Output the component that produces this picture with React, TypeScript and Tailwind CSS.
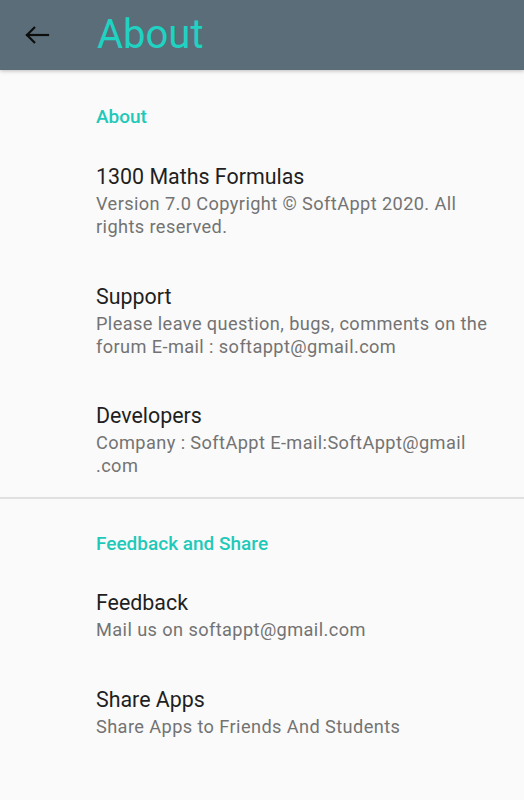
import React from "react";

type Item = { title: string; summary: string };

const Pref = ({ title, summary }: Item) => (
  <div className="pl-24 pr-[24px] pt-[22px] pb-[21px]">
    <div className="text-[21.4px] leading-[31px] text-[#1f1f1f]">{title}</div>
    <div className="text-[18.2px] leading-[23px] tracking-[0.4px] text-[#737373]">{summary}</div>
  </div>
);

const Header = ({ children }: { children: React.ReactNode }) => (
  <div className="pl-24 text-[19px] leading-[24px] font-medium text-[#1fc9b9]">{children}</div>
);

export default function App() {
  return (
    <div
      className="w-[524px] h-[800px] bg-[#fafafa] overflow-hidden"
      style={{ fontFamily: "Roboto, 'Noto Sans', sans-serif" }}
    >
      <div className="relative z-10 h-[70px] bg-[#5a6d78] flex items-center shadow-[0_1px_4px_rgba(0,0,0,0.25)]">
        <div className="w-24 flex items-center pl-[25px]">
          <svg width="26" height="20" viewBox="0 0 26 20" fill="none" stroke="#0d0d0d" strokeWidth="2.2" strokeLinecap="square">
            <path d="M2 10H23" />
            <path d="M10 2L2 10L10 18" strokeLinecap="butt" />
          </svg>
        </div>
        <div className="text-[40px] leading-none text-[#20d2c2] mt-[-1px] pl-[1px]">About</div>
      </div>

      <div className="pt-[35px]">
        <Header>About</Header>
        <div className="h-[10px]" />
        <Pref title="1300 Maths Formulas" summary="Version 7.0 Copyright © SoftAppt 2020. All rights reserved." />
        <Pref title="Support" summary="Please leave question, bugs, comments on the forum E-mail : softappt@gmail.com" />
        <div className="pl-24 pr-[24px] pt-[21px] pb-[20px]">
          <div className="text-[21.4px] leading-[31px] text-[#1f1f1f]">Developers</div>
          <div className="text-[18.2px] leading-[23px] tracking-[0.4px] text-[#737373]">
            Company : SoftAppt E-mail:SoftAppt@gmail .com
          </div>
        </div>
      </div>
      <div className="h-[2px] bg-[#e0e0e0]" />
      <div className="pt-[33px]">
        <Header>Feedback and Share</Header>
        <div className="h-[9px]" />
        <Pref title="Feedback" summary="Mail us on softappt@gmail.com" />
        <Pref title="Share Apps" summary="Share Apps to Friends And Students" />
      </div>
    </div>
  );
}
